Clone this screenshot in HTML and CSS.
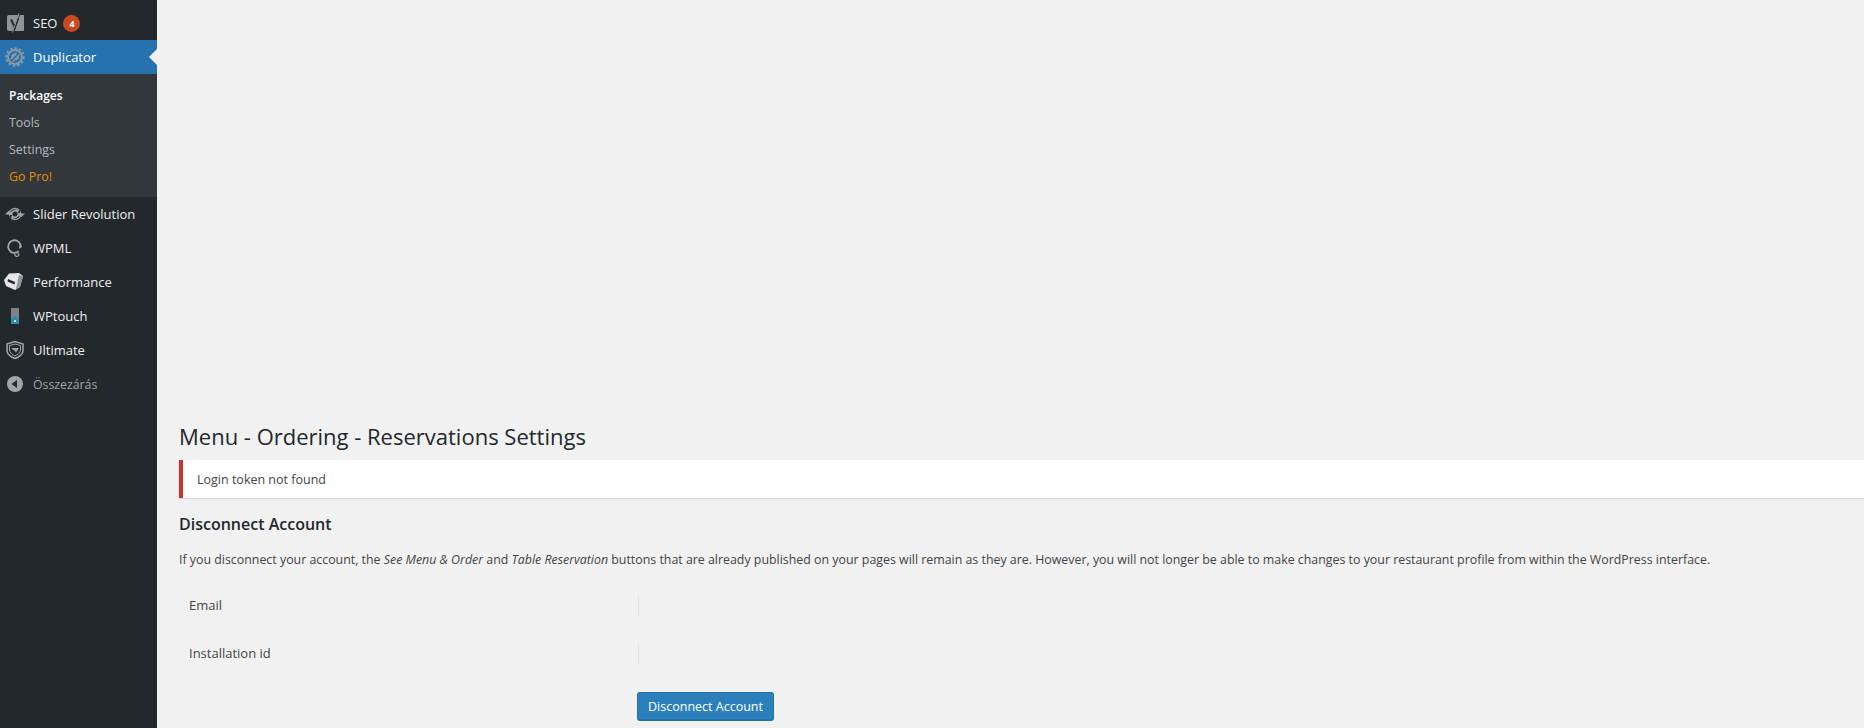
FILE: index.html
```html
<!DOCTYPE html>
<html lang="hu">
<head>
<meta charset="utf-8">
<title>Menu - Ordering - Reservations Settings</title>
<link rel="stylesheet" href="styles.css">
</head>
<body>
<div class="layout">
  <nav class="sidebar">
    <ul class="menu">
      <li class="item">
        <svg class="icon" viewBox="0 0 20 20"><path fill="#8f9499" d="M4 2h15v16H4a2 2 0 0 1-2-2V4a2 2 0 0 1 2-2z"/><path fill="none" stroke="#23282d" stroke-width="2" d="M6 6.500 9.500 13.500M13 5.500 8.500 18"/><path fill="none" stroke="#8f9499" stroke-width="1" d="M14 0 7.500 19.500"/><path fill="none" stroke="#23282d" stroke-width=".8" d="M15.200 0 8.600 20"/></svg>
        <span class="label">SEO</span><span class="badge">4</span>
      </li>
      <li class="item active">
        <svg class="icon" viewBox="0 0 20 20"><g fill="none" stroke="#8d9aa5"><circle cx="10" cy="10" r="7" stroke-width="1.800"/><circle cx="10" cy="10" r="8.700" stroke-width="2.200" stroke-dasharray="2.300 2.170"/><path stroke-width="1.300" d="M5.500 12.500 11.500 5.500M8 14.500 14.500 7.500M6.500 9.500 9 6.500M11 13 14 10M7 11.500 11 7M9.500 13 13 9"/></g></svg>
        <span class="label">Duplicator</span>
        <span class="pointer"></span>
      </li>
      <li class="sub">
        <a class="sub-link current">Packages</a>
        <a class="sub-link">Tools</a>
        <a class="sub-link">Settings</a>
        <a class="sub-link pro">Go Pro!</a>
      </li>
      <li class="item">
        <svg class="icon" viewBox="0 0 20 20"><circle cx="10" cy="10" r="6.200" fill="#a0a5aa"/><path fill="#23282d" d="M5 10a5 5 0 0 1 9-3l-1.500 1.500 1 .5H15l.5-3.500L14 6.500A6 6 0 0 0 5 10zM15 10a5 5 0 0 1-9 3l1.500-1.500-1-.5H5l-.5 3.500L6 13.500A6 6 0 0 0 15 10z"/><path fill="#a0a5aa" d="M0 10.500 4 6.500 8 10.500zM12 9.500 16 13.500 20 9.500z"/><circle cx="10" cy="10" r="2.500" fill="#23282d"/></svg>
        <span class="label">Slider Revolution</span>
      </li>
      <li class="item">
        <svg class="icon" viewBox="0 0 20 20"><path fill="none" stroke="#a0a5aa" stroke-width="1.800" d="M13.800 13.200A6.300 6.300 0 1 1 15.800 9"/><path fill="none" stroke="#a0a5aa" stroke-width="1.200" d="M10 15.500c-1 2.500 1.500 3.500 3 2.500 1.500-1 1-2.500-.5-2.500"/><path fill="#a0a5aa" d="M14.500 6l2.500 3-3 2z"/></svg>
        <span class="label">WPML</span>
      </li>
      <li class="item">
        <svg class="icon icon-perf" viewBox="0 0 20 20"><path fill="#e3e5e6" d="M5 1.500 15 1l4 3-3 11-5 3-9-4-2-6z"/><path fill="#8f9599" d="M15 3l4 1-3 11-4 2z"/><path fill="#23282d" d="M4 7l7 3-.5 2.500-7-3z"/></svg>
        <span class="label">Performance</span>
      </li>
      <li class="item">
        <svg class="icon" viewBox="0 0 20 20"><rect x="6" y="2" width="8" height="16" rx="1" fill="#7b8388"/><path fill="#2f8aa3" d="M6 13l4-3 4 3v5H6z"/><rect x="9" y="14" width="2" height="2" fill="#b9dbe4"/></svg>
        <span class="label">WPtouch</span>
      </li>
      <li class="item">
        <svg class="icon" viewBox="0 0 20 20"><path fill="none" stroke="#a0a5aa" stroke-width="1.600" d="M10 1.500 2 4v6.500c0 3.500 4 6.500 8 8 4-1.500 8-4.500 8-8V4z"/><path fill="none" stroke="#a0a5aa" stroke-width="1" d="M10 4 4.500 5.500v4.500c0 2.500 3 4.800 5.500 6 2.500-1.200 5.500-3.500 5.500-6V5.500z"/><path fill="#a0a5aa" d="M6.500 8h7.500L11 12.500 9.500 10.500 8 10z"/></svg>
        <span class="label">Ultimate</span>
      </li>
      <li class="item collapse">
        <svg class="icon" viewBox="0 0 20 20"><circle cx="10" cy="10" r="8" fill="#a0a5aa"/><path fill="#23282d" d="M12 6v8L6.500 10z"/></svg>
        <span class="label">Összezárás</span>
      </li>
    </ul>
  </nav>
  <main class="content">
    <h1 class="title">Menu - Ordering - Reservations Settings</h1>
    <div class="notice">Login token not found</div>
    <h2 class="heading">Disconnect Account</h2>
    <p class="desc">If you disconnect your account, the <em>See Menu &amp; Order</em> and <em>Table Reservation</em> buttons that are already published on your pages will remain as they are. However, you will not longer be able to make changes to your restaurant profile from within the WordPress interface.</p>
    <div class="row"><div class="row-label">Email</div><div class="row-value"></div></div>
    <div class="row"><div class="row-label">Installation id</div><div class="row-value"></div></div>
    <div class="actions"><button class="button">Disconnect Account</button></div>
  </main>
</div>
</body>
</html>
```
FILE: styles.css
```css
* { box-sizing: border-box; }
html, body { margin: 0; height: 100%; overflow: hidden; }
body { background: #f1f1f1; color: #444; font-family: "Open Sans", "Noto Sans", sans-serif; font-size: 12.500px; }
.layout { display: flex; height: 728px; }
.sidebar { width: 157px; flex: none; background: #23282d; }
.menu { list-style: none; margin: 0; padding: 6px 0 0; }
.item { position: relative; display: flex; align-items: center; height: 34px; color: #eee; font-size: 13px; padding-left: 5px; }
.icon { width: 20px; height: 20px; flex: none; }
.icon-perf { margin-left: -1px; margin-right: 1px; }
.label { margin-left: 8px; white-space: nowrap; }
.badge { margin-left: 6px; width: 17px; height: 17px; border-radius: 50%; background: #ca4a1f; color: #fff; font-size: 9px; font-weight: 700; line-height: 17px; text-align: center; }
.active { background: #2572ae; color: #fff; }
.pointer { position: absolute; right: 0; top: 9px; border: 8px solid transparent; border-right-color: #f1f1f1; border-left-width: 0; }
.sub { display: flex; flex-direction: column; background: #32373c; padding: 8px 0 7px; }
.sub-link { height: 27px; line-height: 27px; padding-left: 9px; color: #b4b9be; font-size: 12.400px; }
.current { color: #fff; font-weight: 600; font-size: 12px; }
.pro { color: #e58b00; }
.collapse { color: #a0a5aa; font-size: 12.300px; }
.content { flex: 1; min-width: 0; padding-top: 419px; display: flex; flex-direction: column; }
.title { margin: 0 0 0 22px; height: 41px; line-height: 35px; font-size: 22px; font-weight: 400; color: #23282d; }
.notice { margin-left: 22px; height: 38px; line-height: 40px; padding-left: 14px; background: #fff; border-left: 4px solid #cf2e2e; box-shadow: 0 1px 1px rgba(0, 0, 0, .1); }
.heading { margin: 14px 0 0 22px; height: 24px; line-height: 24px; font-size: 16px; font-weight: 600; color: #23282d; }
.desc { margin: 15px 0 0 22px; line-height: 18px; white-space: nowrap; font-size: 12.385px; }
.row { display: flex; align-items: center; height: 48px; padding-left: 32px; color: #444; font-size: 13px; }
.row-label { width: 449px; line-height: 18px; padding-bottom: 2px; }
.row-value { width: 1px; height: 20px; background: #e2e2e2; }
.desc + .row { margin-top: 13px; }
.actions { margin-top: 14px; padding-left: 480px; }
.button { display: block; width: 137px; height: 29px; padding: 0; background: #2b80bb; border: 1px solid #2271a8; border-bottom-width: 2px; border-radius: 3px; color: #fff; font: inherit; }
```
